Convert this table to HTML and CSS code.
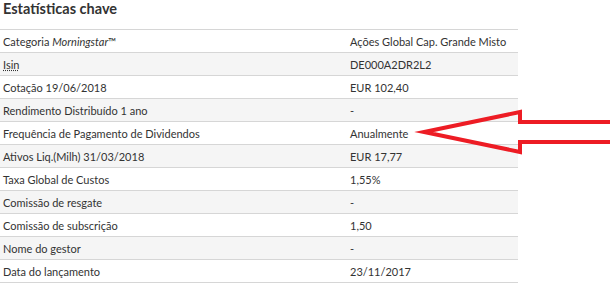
FILE: index.html
```html
<!DOCTYPE html>
<html lang="pt">
<head>
<meta charset="utf-8">
<title>Estatísticas chave</title>
<link rel="stylesheet" href="styles.css">
</head>
<body>
<div class="page">
  <h2 class="title">Estatísticas chave</h2>
  <table class="stats">
    <colgroup><col class="col-label"><col class="col-value"></colgroup>
    <tbody>
      <tr><td>Categoria <i>Morningstar</i>™</td><td>Ações Global Cap. Grande Misto</td></tr>
      <tr><td><abbr class="abbr">Isin</abbr></td><td>DE000A2DR2L2</td></tr>
      <tr><td>Cotação 19/06/2018</td><td>EUR 102,40</td></tr>
      <tr><td>Rendimento Distribuído 1 ano</td><td>-</td></tr>
      <tr><td>Frequência de Pagamento de Dividendos</td><td>Anualmente</td></tr>
      <tr><td>Ativos Liq.(Milh) 31/03/2018</td><td>EUR 17,77</td></tr>
      <tr><td>Taxa Global de Custos</td><td>1,55%</td></tr>
      <tr><td>Comissão de resgate</td><td>-</td></tr>
      <tr><td>Comissão de subscrição</td><td>1,50</td></tr>
      <tr><td>Nome do gestor</td><td>-</td></tr>
      <tr><td>Data do lançamento</td><td>23/11/2017</td></tr>
    </tbody>
  </table>
  <svg class="arrow" width="200" height="60" viewBox="410 102 200 60" aria-hidden="true">
    <path d="M612,122 L520,122 L520,112 L424,132 L520,152 L520,142 L612,142" fill="none" stroke="#ed1c24" stroke-width="4" stroke-linejoin="miter" stroke-miterlimit="10"/>
  </svg>
</div>
</body>
</html>
```
FILE: styles.css
```css
html, body {
  margin: 0;
  padding: 0;
  background: #fff;
}
.page {
  position: relative;
  width: 610px;
  font-family: Lato, "Open Sans", sans-serif;
  color: #333;
}
.title {
  margin: 0;
  height: 29px;
  padding: 0 0 0 3px;
  font-size: 14.5px;
  line-height: 18px;
  font-weight: bold;
  color: #333;
}
.stats {
  width: 518px;
  table-layout: fixed;
  border-collapse: collapse;
  font-size: 11px;
}
.col-label {
  width: 347px;
}
.stats tr {
  border-top: 1px solid #d6d6d6;
  border-bottom: 1px solid #d6d6d6;
}
.stats tr:nth-child(even) {
  background: #f5f5f5;
}
.stats td {
  height: 22px;
  padding: 0 3px;
  vertical-align: middle;
  white-space: nowrap;
}
.abbr {
  text-decoration: underline dotted;
}
.arrow {
  position: absolute;
  left: 410px;
  top: 102px;
}
```
